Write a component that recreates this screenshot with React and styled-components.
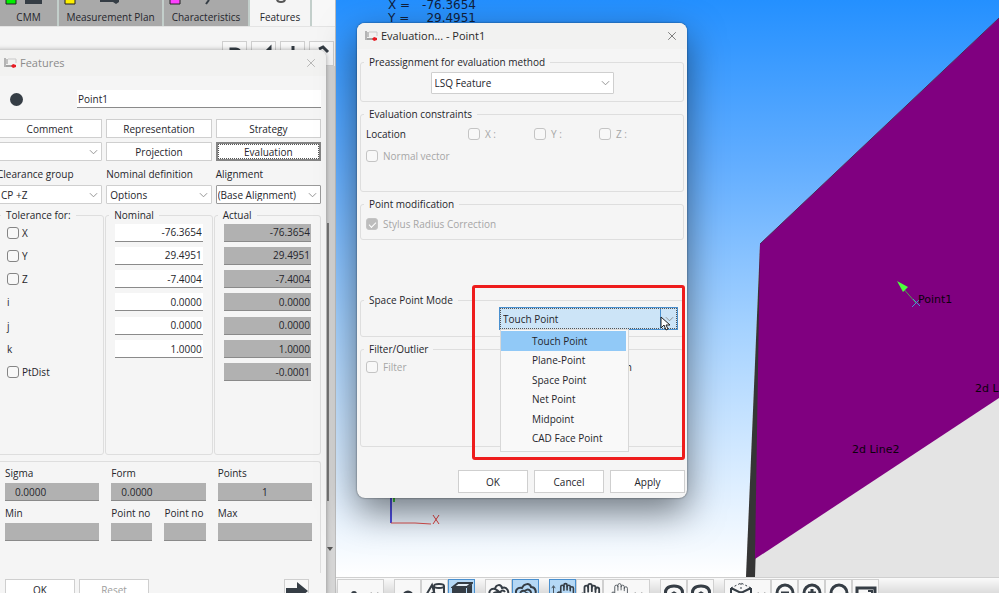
import { useState } from 'react';
import styled, {
  createGlobalStyle,
  css,
} from 'styled-components';
import { Hand, X } from 'lucide-react';

const TABS = [
  { name: 'CMM', mark: '#00f000', width: 59 },
  {
    name: 'Measurement Plan',
    mark: '#fff000',
    width: 105,
  },
  {
    name: 'Characteristics',
    mark: '#ff40ff',
    width: 86,
  },
  { name: 'Features', width: 62 },
];

const COORDS = [
  { name: 'X', value: '-76.3654', check: true },
  { name: 'Y', value: '29.4951', check: true },
  { name: 'Z', value: '-7.4004', check: true },
  { name: 'i', value: '0.0000' },
  { name: 'j', value: '0.0000' },
  { name: 'k', value: '1.0000' },
];

const POINT_MODES = [
  'Touch Point',
  'Plane-Point',
  'Space Point',
  'Net Point',
  'Midpoint',
  'CAD Face Point',
];

const TOOLS = [
  [{ icon: 'dot', wide: true }],
  [
    { icon: 'arc' },
    { icon: 'shapes' },
    { icon: 'box', active: true },
  ],
  [
    { icon: 'knot' },
    { icon: 'contour', active: true },
  ],
  [
    { icon: 'moveHand', active: true },
    { icon: 'hand' },
    { icon: 'finger', wide: true },
  ],
  [{ icon: 'rotate' }, { icon: 'rotate' }],
  [
    { icon: 'cube', wide: true },
    { icon: 'zoomOut' },
    { icon: 'zoomIn' },
    { icon: 'zoom' },
    { icon: 'fit' },
  ],
];

const GLYPHS = {
  dot: <circle cx="11" cy="12" r="3" fill="#353d45" stroke="none" />,
  arc: <path d="M7 14a4 4 0 0 1 8 0" strokeWidth="3" />,
  shapes: (
    <>
      <path d="M1 15 8 3l3 10M4 14l6-4" />
      <ellipse cx="15" cy="4" rx="5" ry="2" />
      <path d="M10 4v11M20 4v12M10 13c3 2 7 2 10 0" />
    </>
  ),
  box: (
    <>
      <path d="M1 6h14v15H1zM16 6l5-4v14l-5 4z" fill="#353d45" stroke="none" />
      <path d="M2 5 7 1h14l-5 4z" fill="#e4eef6" />
    </>
  ),
  knot: (
    <path d="M2 14c-2-5 1-8 5-7 1-5 6-5 7-1 5-2 8 4 5 8M5 14c0-4 4-5 6-2M9 8l7 6M11 14c0-5 4-7 6-4M7 7l3 2" />
  ),
  contour: (
    <path d="M2 14C-1 8 3 5 7 6c2-5 8-5 9-1 5 0 6 6 3 9M6 14c-2-4 1-6 4-5 3-3 7-1 6 5M9 13c2-3 4-2 5 0" />
  ),
  rotate: (
    <path d="M3 14C1 7 5 4 11 4s10 3 8 10M9 12l2-1 2 1" strokeWidth="3" />
  ),
  cube: (
    <>
      <path d="m1 6 10 5 10-5M11 11v11M1 6v12M21 6v12" />
      <path d="m1 6 10-5 10 5M11 1v10" strokeDasharray="2 2" strokeWidth="1" />
    </>
  ),
  zoomOut: (
    <>
      <circle cx="11" cy="11" r="8" strokeWidth="3" />
      <path d="M7 11h8" strokeWidth="3" />
    </>
  ),
  zoomIn: (
    <>
      <circle cx="11" cy="11" r="8" strokeWidth="3" />
      <path d="M7 11h8M11 7v8" strokeWidth="3" />
    </>
  ),
  zoom: <circle cx="11" cy="11" r="8" strokeWidth="3" />,
  fit: (
    <>
      <path d="M2 6h18v14H2z" strokeWidth="3" />
      <path d="M13 9h4v4M5 12v3h3" />
    </>
  ),
};

const ToolGlyph = ({ name }) => {
  if (name === 'hand')
    return <Hand size={22} color="#353d45" strokeWidth={2} />;
  if (name === 'finger')
    return <Hand size={19} color="#353d45" strokeWidth={1} />;
  if (name === 'moveHand')
    return (
      <>
        <UpArrow viewBox="0 0 6 14">
          <path d="M3 14V4M1 6l2-3 2 3" />
        </UpArrow>
        <Hand size={19} color="#353d45" />
      </>
    );
  return (
    <Glyph viewBox="0 0 22 22">{GLYPHS[name]}</Glyph>
  );
};

const Chevron = () => (
  <ChevronSvg viewBox="0 0 10 6">
    <path d="m1 1 4 4 4-4" />
  </ChevronSvg>
);

const Dropdown = ({ label, value, options, ...rest }) => (
  <SelectBox {...rest}>
    <select aria-label={label} defaultValue={value}>
      {(options || [value]).map((item) => (
        <option key={item}>{item}</option>
      ))}
    </select>
    <Chevron />
  </SelectBox>
);

const AppIcon = () => (
  <AppIconSvg viewBox="0 0 14 12">
    <path d="M2 1v9" stroke="#b4b4b4" strokeWidth="2" />
    <path d="M4 2v5" stroke="#8f8f8f" strokeWidth="1" />
    <path d="M5 2h8v4" stroke="#c9c9c9" strokeWidth="1" />
    <path d="M3 9h6" stroke="#555" strokeWidth="1" />
    <path d="m8 9 2-2 3 1v2l-3 1z" fill="#e81b23" />
  </AppIconSvg>
);

const Viewport = () => (
  <Scene role="img" aria-label="CAD view">
    <path d="M760 244 999 18v559H746z" transform="translate(-336)" fill="#e4e4e4" />
    <path d="M760 244 746 577h9l10-333z" transform="translate(-336)" fill="#353535" />
    <path d="M760 244 999 18v380L755 559z" transform="translate(-336)" fill="#800080" />
    <path d="M424 244 663 18" stroke="#4a2a5a" strokeWidth="1" />
    <path d="m565 286 15 17" stroke="#4fa04f" />
    <path d="m561 281 11 6-5 5z" fill="#4cff3c" />
    <path d="m576 307 8-8M577 299l7 7" stroke="#4a90d0" />
    <text x="582" y="303">Point1</text>
    <text x="516" y="453">2d Line2</text>
    <text x="639" y="392">2d Line1</text>
    <path d="M55 490v33" stroke="#5050e8" strokeWidth="2" />
    <path d="M58 490v12" stroke="#3fd03f" strokeWidth="2" />
    <path d="M55 523h24l16 1" stroke="#e05050" strokeWidth="1" fill="none" />
    <path d="m97 515 6 9M103 515l-6 9" stroke="#e04040" />
  </Scene>
);

const FeaturesWindow = () => (
  <FeaturesDialog>
    <TitleBar $muted>
      <AppIcon />
      <h2>Features</h2>
      <CloseButton aria-label="Close Features">
        <X size={14} strokeWidth={1} />
      </CloseButton>
    </TitleBar>
    <FeaturesBody>
      <NameRow>
        <FeatureDot />
        <NameInput aria-label="Feature name" defaultValue="Point1" />
      </NameRow>
      <ButtonGrid>
        <Button>Comment</Button>
        <Button>Representation</Button>
        <Button>Strategy</Button>
        <Dropdown label="Comment list" value="" />
        <Button>Projection</Button>
        <Button $focused>Evaluation</Button>
      </ButtonGrid>
      <OptionGrid>
        <span>Clearance group</span>
        <span>Nominal definition</span>
        <span>Alignment</span>
        <Dropdown label="Clearance group" value="CP +Z" />
        <Dropdown label="Nominal definition" value="Options" />
        <Dropdown label="Alignment" value="(Base Alignment)" $flush $strong />
      </OptionGrid>
      <ValueGrid>
        <ValueGroup>
          <legend>Tolerance for:</legend>
          <ValueRows>
            {COORDS.map(({ name, check }) =>
              check ? (
                <CheckLabel key={name}>
                  <Checkbox />
                  {name}
                </CheckLabel>
              ) : (
                <span key={name}>{name}</span>
              ),
            )}
            <CheckLabel>
              <Checkbox />
              PtDist
            </CheckLabel>
          </ValueRows>
        </ValueGroup>
        <ValueGroup>
          <legend>Nominal</legend>
          <ValueRows>
            {COORDS.map(({ name, value }) => (
              <ValueInput
                key={name}
                aria-label={`Nominal ${name}`}
                defaultValue={value}
              />
            ))}
          </ValueRows>
        </ValueGroup>
        <ValueGroup>
          <legend>Actual</legend>
          <ValueRows>
            {[
              ...COORDS,
              { name: 'PtDist', value: '-0.0001' },
            ].map(({ name, value }) => (
              <ValueInput
                key={name}
                aria-label={`Actual ${name}`}
                value={value}
                readOnly
                $filled
              />
            ))}
          </ValueRows>
        </ValueGroup>
      </ValueGrid>
      <ResultPanel>
        <ResultField>
          Sigma
          <ResultInput value="0.0000" readOnly />
        </ResultField>
        <ResultField>
          Form
          <ResultInput value="0.0000" readOnly />
        </ResultField>
        <ResultField>
          Points
          <ResultInput value="1" readOnly $center />
        </ResultField>
        <ResultField>
          Min
          <ResultInput readOnly />
        </ResultField>
        <PointPair>
          <ResultField>
            Point no
            <ResultInput readOnly />
          </ResultField>
          <ResultField>
            Point no
            <ResultInput readOnly />
          </ResultField>
        </PointPair>
        <ResultField>
          Max
          <ResultInput readOnly />
        </ResultField>
      </ResultPanel>
      <FeaturesFooter>
        <Button>OK</Button>
        <Button disabled>Reset</Button>
        <NextButton aria-label="Next feature">
          <svg viewBox="0 0 22 18">
            <path d="M0 6h11V0l11 9-11 9v-6H0z" />
          </svg>
        </NextButton>
      </FeaturesFooter>
    </FeaturesBody>
  </FeaturesDialog>
);

const EvaluationWindow = () => {
  const [mode, setMode] = useState('Touch Point');
  const [open, setOpen] = useState(true);

  const handlePick = (item) => {
    setMode(item);
    setOpen(false);
  };

  return (
    <EvaluationDialog>
      <TitleBar>
        <AppIcon />
        <h2>Evaluation... - Point1</h2>
        <CloseButton aria-label="Close Evaluation">
          <X size={14} strokeWidth={1} />
        </CloseButton>
      </TitleBar>
      <EvaluationForm>
        <Group $height={46}>
          <legend>Preassignment for evaluation method</legend>
          <MethodRow>
            <Dropdown label="Evaluation method" value="LSQ Feature" $tall />
          </MethodRow>
        </Group>
        <Group $height={84}>
          <legend>Evaluation constraints</legend>
          <LocationRow>
            <span>Location</span>
            {['X :', 'Y :', 'Z :'].map((axis) => (
              <CheckLabel key={axis} $disabled>
                <Checkbox disabled />
                {axis}
              </CheckLabel>
            ))}
          </LocationRow>
          <CheckLabel $disabled>
            <Checkbox disabled />
            Normal vector
          </CheckLabel>
        </Group>
        <Group $height={42} $pad={8}>
          <legend>Point modification</legend>
          <CheckLabel $disabled>
            <Checkbox disabled defaultChecked />
            Stylus Radius Correction
          </CheckLabel>
        </Group>
        <Group $height={43} $pad={1} $apart>
          <legend>Space Point Mode</legend>
          <ModeRow>
            <ModeSelect>
              <select
                aria-label="Space Point Mode"
                value={mode}
                onChange={(e) => setMode(e.target.value)}
              >
                {POINT_MODES.map((item) => (
                  <option key={item}>{item}</option>
                ))}
              </select>
              <Chevron />
              {open && (
                <ModeList role="listbox">
                  {POINT_MODES.map((item) => (
                    <ModeItem
                      key={item}
                      role="option"
                      aria-selected={item === mode}
                      $selected={item === mode}
                      onClick={() => handlePick(item)}
                    >
                      {item}
                    </ModeItem>
                  ))}
                </ModeList>
              )}
              <Cursor viewBox="0 0 10 15">
                <path d="M1 1v11l3-3 2 5 2-1-2-4h4z" />
              </Cursor>
            </ModeSelect>
          </ModeRow>
        </Group>
        <Group $height={104} $pad={6}>
          <legend>Filter/Outlier</legend>
          <FilterRow>
            <CheckLabel $disabled>
              <Checkbox disabled />
              Filter
            </CheckLabel>
            <span>n</span>
          </FilterRow>
        </Group>
        <EvaluationFooter>
          <Button>OK</Button>
          <Button>Cancel</Button>
          <Button>Apply</Button>
        </EvaluationFooter>
      </EvaluationForm>
      <Highlight />
    </EvaluationDialog>
  );
};

const App = () => (
  <Workspace>
    <GlobalStyle />
    <Sidebar>
      <TabBar>
        {TABS.map(({ name, mark, width }, index) => (
          <Tab key={name} $width={width} $current={!mark}>
            <svg viewBox="0 0 62 11">
              {mark && (
                <path d="M6-4h10v8H6z" fill={mark} stroke="#222" />
              )}
              {index === 0 && <path d="M25 0h17v4H25z" fill="#353d45" />}
              {index === 1 && (
                <path d="M41 0h19v2H41zM54 2h6l-3 2z" fill="#353d45" />
              )}
              {index === 2 && (
                <path d="m45 0-3 4" stroke="#353d45" strokeWidth="2" />
              )}
              {index === 3 && (
                <path d="M27-1c0 4 8 4 8 0" stroke="#555" fill="none" strokeWidth="2" />
              )}
            </svg>
            {name}
          </Tab>
        ))}
      </TabBar>
      <SideTools>
        <SideButton aria-label="Properties">
          <path d="M8 20V7h5a4 4 0 0 1 0 8H8" />
        </SideButton>
        <SideButton aria-label="Measure">
          <path d="m14 10 4-4v12" />
        </SideButton>
        <SideButton aria-label="Insert">
          <path d="M12 4v12" />
        </SideButton>
        <SideButton aria-label="Move up">
          <path d="m9 7 4-2 5 5" />
        </SideButton>
      </SideTools>
      <ScrollTrack>
        <ScrollThumb />
        <ScrollArrow viewBox="0 0 6 4">
          <path d="M0 0h6L3 4z" />
        </ScrollArrow>
      </ScrollTrack>
      <FeaturesWindow />
    </Sidebar>
    <Main>
      <Canvas>
        <Readout>
          <span>X =</span>
          <span>-76.3654</span>
          <span>Y =</span>
          <span>29.4951</span>
        </Readout>
        <Viewport />
      </Canvas>
      <Toolbar>
        {TOOLS.map((group, index) => (
          <ToolGroup key={index}>
            {group.map(({ icon, wide, active }, i) => (
              <ToolButton
                key={i}
                aria-label={icon}
                $wide={wide}
                $active={active}
              >
                <ToolGlyph name={icon} />
                {wide && <Chevron />}
              </ToolButton>
            ))}
          </ToolGroup>
        ))}
      </Toolbar>
    </Main>
    <EvaluationWindow />
  </Workspace>
);

export default App;

const GlobalStyle = createGlobalStyle`
  * {
    box-sizing: border-box;
  }

  body {
    margin: 0;
    overflow: hidden;
    font: 500 10px/12px 'Open Sans', 'Noto Sans', sans-serif;
    color: #25252b;
  }

  button, input, select {
    font: inherit;
    color: inherit;
  }
`;

const Workspace = styled.div`
  position: relative;
  display: grid;
  grid-template-columns: 336px minmax(0, 1fr);
  height: 100vh;
  overflow: hidden;
`;

const Sidebar = styled.aside`
  position: relative;
  display: flex;
  flex-direction: column;
  overflow: hidden;
  background: #f5f5f5;
  border-right: 1px solid #bdbdbd;
`;

const TabBar = styled.nav`
  display: flex;
  height: 27px;
  background: #f8f8f8;
  border-bottom: 1px solid #e4e4e4;
`;

const Tab = styled.button`
  width: ${({ $width }) => $width}px;
  padding: 0;
  border: none;
  border-right: 2px solid #c3cfcb;
  background: ${({ $current }) => ($current ? '#f5f5f5' : '#a9a9a9')};
  display: flex;
  flex-direction: column;
  align-items: center;
  white-space: nowrap;

  svg {
    width: 62px;
    height: 11px;
    align-self: flex-start;
    flex: none;
  }
`;

const SideTools = styled.div`
  display: flex;
  justify-content: flex-end;
  gap: 4px;
  padding: 14px 1px 0;
`;

const SideButtonFrame = styled.button`
  width: 25px;
  height: 25px;
  padding: 0;
  border: 1px solid #cfcfcf;
  background: #f8f8f8;

  svg {
    width: 23px;
    height: 23px;
    fill: none;
    stroke: #353d45;
    stroke-width: 3;
  }
`;

const SideButton = ({ children, ...rest }) => (
  <SideButtonFrame {...rest}>
    <svg viewBox="0 0 23 23">{children}</svg>
  </SideButtonFrame>
);

const ScrollTrack = styled.div`
  flex: 1;
  width: 9px;
  align-self: flex-end;
  display: flex;
  flex-direction: column;
  align-items: flex-start;
  background: #d5d5d5;
  padding: 157px 1px 42px;
  gap: 46px;
`;

const ScrollThumb = styled.div`
  flex: 1;
  width: 2px;
  background: #7c7c7c;
`;

const ScrollArrow = styled.svg`
  width: 6px;
  height: 4px;
  fill: #555;
`;

const dialog = css`
  position: absolute;
  background: #f5f5f5;
  border-radius: 8px;
`;

const FeaturesDialog = styled.section`
  ${dialog}
  top: 50px;
  left: -10px;
  width: 336px;
  bottom: -40px;
  box-shadow: 0 0 5px rgba(0, 0, 0, 0.35);
`;

const EvaluationDialog = styled.section`
  ${dialog}
  top: 23px;
  left: 357px;
  width: 330px;
  box-shadow:
    0 0 2px rgba(0, 0, 0, 0.6),
    0 14px 36px rgba(0, 0, 0, 0.5);
`;

const TitleBar = styled.header`
  display: flex;
  align-items: center;
  gap: 3px;
  height: 26px;
  padding: 0 8px 0 7px;
  background: #f2f2f1;
  border-radius: 8px 8px 0 0;
  color: ${({ $muted }) => ($muted ? '#8b8b8b' : '#2a2a2a')};
  ${({ $muted }) => $muted && 'padding: 0 8px 0 13px;'}

  h2 {
    flex: 1;
    margin: 0;
    font: 400 11px/14px 'Open Sans', sans-serif;
  }
`;

const CloseButton = styled.button`
  display: flex;
  padding: 0;
  border: none;
  background: none;
`;

const AppIconSvg = styled.svg`
  width: 14px;
  height: 12px;
  fill: none;
`;

const FeaturesBody = styled.div`
  padding: 14px 5px 0 7px;
`;

const NameRow = styled.div`
  display: flex;
  align-items: center;
  justify-content: space-between;
  padding-left: 13px;
`;

const FeatureDot = styled.span`
  width: 13px;
  height: 13px;
  border-radius: 50%;
  background: #353d45;
`;

const field = css`
  min-width: 0;
  height: 18px;
  padding: 0 1px;
  border: none;
  border-bottom: 1px solid #8a8a8a;
  border-radius: 0;
  background: #fff;
`;

const NameInput = styled.input`
  ${field}
  width: 244px;
`;

const ButtonGrid = styled.div`
  display: grid;
  grid-template-columns: repeat(3, minmax(0, 1fr));
  gap: 4px;
  margin-top: 11px;
`;

const OptionGrid = styled(ButtonGrid)`
  row-gap: 5px;
  margin-top: 7px;
  white-space: nowrap;
`;

const Button = styled.button`
  height: 19px;
  padding: 0;
  border: 1px solid #cfcfcf;
  background: #fff;

  &:disabled {
    color: #a0a0a0;
  }

  ${({ $focused }) =>
    $focused &&
    css`
      border: 2px solid #858585;
      outline: 1px dotted #555;
      outline-offset: -3px;
    `}
`;

const ChevronSvg = styled.svg`
  flex: none;
  width: 9px;
  height: 6px;
  fill: none;
  stroke: #8a8a8a;
`;

const SelectBox = styled.div`
  display: grid;
  align-items: center;

  select {
    grid-area: 1 / 1;
    width: 100%;
    height: ${({ $tall }) => ($tall ? 22 : 19)}px;
    padding: 0 ${({ $flush }) => ($flush ? 1 : 3)}px;
    appearance: none;
    border: 1px solid ${({ $strong }) => ($strong ? '#9a9a9a' : '#cfcfcf')};
    border-radius: 1px;
    background: #fff;
  }

  ${ChevronSvg} {
    grid-area: 1 / 1;
    justify-self: end;
    margin-right: 4px;
    pointer-events: none;
  }
`;

const Group = styled.fieldset`
  min-width: 0;
  min-height: ${({ $height }) => $height}px;
  margin: ${({ $apart }) => ($apart ? 48 : 0)}px 0 0;
  padding: ${({ $pad = 4 }) => $pad}px 5px 0;
  border: 1px solid #dedede;
  border-radius: 3px;

  legend {
    margin-left: -2px;
    padding: 0 5px;
  }
`;

const ValueGrid = styled.div`
  display: grid;
  grid-template-columns: repeat(3, minmax(0, 1fr));
  gap: 1px;
  margin-top: 5px;
`;

const ValueGroup = styled(Group)`
  min-height: 246px;
  padding: 0 9px;

  legend {
    margin-left: -6px;
  }
`;

const ValueRows = styled.div`
  display: grid;
  grid-template-rows: repeat(7, 1fr);
  align-items: center;
  height: 163px;
`;

const ValueInput = styled.input`
  ${field}
  width: 100%;
  text-align: right;
  ${({ $filled }) => $filled && 'background: #b1b1b1;'}
`;

const CheckLabel = styled.label`
  display: flex;
  align-items: center;
  gap: ${({ $disabled }) => ($disabled ? 5 : 3)}px;
  color: ${({ $disabled }) => ($disabled ? '#a6a6a6' : 'inherit')};
`;

const Checkbox = styled.input.attrs({ type: 'checkbox' })`
  appearance: none;
  width: 12px;
  height: 12px;
  margin: 0;
  border: 1px solid #858585;
  border-radius: 3px;
  background: #f8f8f8;

  &:disabled {
    border-color: #c4c4c4;
  }

  &:checked {
    display: grid;
    place-content: center;
    background: #bdbdbd;
  }

  &:checked::before {
    content: '';
    width: 6px;
    height: 3px;
    border: solid #fff;
    border-width: 0 0 1px 1px;
    rotate: -45deg;
  }
`;

const ResultPanel = styled.div`
  display: grid;
  grid-template-columns: repeat(3, minmax(0, 1fr));
  align-content: start;
  gap: 6px 12px;
  height: 112px;
  margin-top: 6px;
  padding: 5px 8px 0;
  border: 1px solid #dedede;
  border-width: 1px 1px 0 0;
  border-radius: 0 3px 0 0;
`;

const ResultField = styled.label`
  display: flex;
  flex-direction: column;
  gap: 4px;
  min-width: 0;
  white-space: nowrap;
`;

const ResultInput = styled.input`
  ${field}
  width: 100%;
  padding: 0 10px;
  background: #b1b1b1;
  text-align: ${({ $center }) => ($center ? 'center' : 'left')};
`;

const PointPair = styled.div`
  display: grid;
  grid-template-columns: repeat(2, minmax(0, 1fr));
  gap: 12px;
`;

const FeaturesFooter = styled.footer`
  display: flex;
  gap: 4px;
  padding: 6px 12px 0 8px;

  ${Button} {
    width: 70px;
    height: 22px;
  }
`;

const NextButton = styled.button`
  width: 25px;
  height: 26px;
  margin-left: auto;
  padding: 0;
  border: 1px solid #cfcfcf;
  background: #f8f8f8;

  svg {
    width: 22px;
    height: 18px;
    fill: #353d45;
  }
`;

const EvaluationForm = styled.form`
  display: flex;
  flex-direction: column;
  gap: 6px;
  padding: 7px 3px 5px;
`;

const MethodRow = styled.div`
  display: grid;
  grid-template-columns: 183px;
  justify-content: center;
`;

const LocationRow = styled.div`
  display: grid;
  grid-template-columns: 102px 66px 65px 60px;
  align-items: center;
  padding: 4px 0 10px;
`;

const ModeRow = styled.div`
  display: flex;
  justify-content: flex-end;
`;

const ModeSelect = styled.div`
  position: relative;
  display: grid;
  align-items: center;
  width: 179px;
  height: 23px;
  border: 1px solid #4a90cf;
  background: #cce4f7;

  select {
    grid-area: 1 / 1;
    width: 100%;
    height: 100%;
    padding: 0 2px;
    appearance: none;
    border: 1px dotted #555;
    border-radius: 0;
    background: none;
  }

  > ${ChevronSvg} {
    grid-area: 1 / 1;
    justify-self: end;
    box-sizing: content-box;
    padding: 7px 3px 7px 4px;
    border-left: 1px solid #4a90cf;
  }
`;

const ModeList = styled.ul`
  position: absolute;
  z-index: 1;
  top: 21px;
  left: 0;
  width: 129px;
  height: 123px;
  margin: 0;
  padding: 1px 2px 3px 0;
  display: grid;
  grid-template-rows: repeat(6, 1fr);
  border: 1px solid #d8d8d8;
  background: #f9f9f9;
  list-style: none;
`;

const ModeItem = styled.li`
  display: flex;
  align-items: center;
  padding-left: 31px;
  background: ${({ $selected }) => ($selected ? '#91c9f7' : 'none')};
`;

const Cursor = styled.svg`
  position: absolute;
  z-index: 2;
  right: 7px;
  top: 8px;
  width: 10px;
  height: 15px;
  fill: #fff;
  stroke: #222;
  stroke-width: 1;
  overflow: visible;
`;

const FilterRow = styled.div`
  display: flex;
  justify-content: space-between;
  padding-right: 46px;
`;

const EvaluationFooter = styled.footer`
  display: grid;
  grid-template-columns: 70px 70px 75px;
  justify-content: end;
  gap: 6px;
  margin: 17px -1px 0 0;

  ${Button} {
    height: 23px;
  }
`;

const Highlight = styled.div`
  position: absolute;
  z-index: 3;
  top: 262px;
  left: 115px;
  right: 2px;
  bottom: 38px;
  border: 3px solid #ee1c1c;
  border-radius: 3px;
  pointer-events: none;
`;

const Main = styled.main`
  display: flex;
  flex-direction: column;
  min-width: 0;
`;

const Canvas = styled.div`
  position: relative;
  flex: 1;
  overflow: hidden;
  background: linear-gradient(#2490ff, #61adff 28%, #a5d2ff 57%, #fff);
`;

const Readout = styled.div`
  display: grid;
  grid-template-columns: 24px 64px;
  padding-left: 52px;
  font: 12px/13px 'DejaVu Sans', sans-serif;
  color: #10203c;
  margin-top: -1px;
  white-space: nowrap;

  span:nth-child(even) {
    text-align: right;
  }
`;

const Scene = styled.svg`
  position: absolute;
  inset: 0;
  width: 100%;
  height: 100%;

  text {
    font: 11px 'DejaVu Sans', sans-serif;
    fill: #0c000c;
  }
`;

const Toolbar = styled.div`
  display: flex;
  gap: 10px;
  height: 16px;
  padding: 1px 0 0 1px;
  overflow: hidden;
  background: linear-gradient(#fafafa, #dcdcdc);
  border-top: 1px solid #d0d0d0;
`;

const ToolGroup = styled.div`
  display: flex;
`;

const ToolButton = styled.button`
  flex: none;
  display: flex;
  align-items: flex-start;
  justify-content: center;
  width: ${({ $wide }) => ($wide ? 47 : 27)}px;
  height: 28px;
  padding: 2px 0;
  border: 1px solid ${({ $active }) => ($active ? '#4a90cf' : '#d0d0d0')};
  background: ${({ $active }) => ($active ? '#b5d8f5' : '#f8f8f8')};

  svg {
    flex: none;
  }

  ${ChevronSvg} {
    margin: 9px 0 0 5px;
  }
`;

const Glyph = styled.svg`
  width: 22px;
  height: 22px;
  fill: none;
  stroke: #353d45;
  stroke-width: 2;
`;

const UpArrow = styled(Glyph)`
  width: 5px;
  height: 14px;
  stroke-width: 1;
`;
